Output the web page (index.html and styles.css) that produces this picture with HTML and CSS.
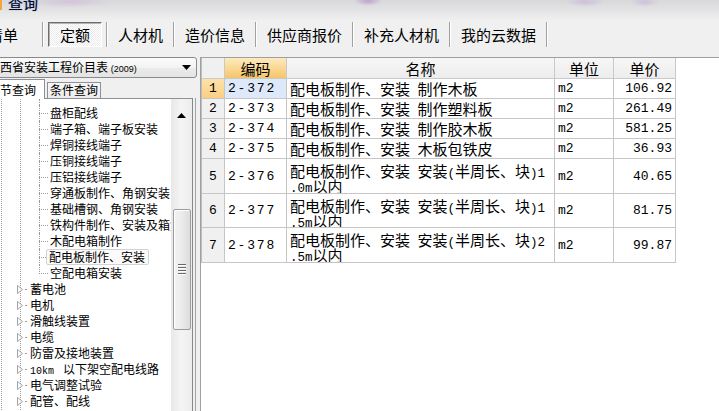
FILE: index.html
```html
<!DOCTYPE html>
<html lang="zh-CN">
<head>
<meta charset="utf-8">
<title>查询</title>
<link rel="stylesheet" href="styles.css">
</head>
<body>
<div class="app">
  <div class="titlebar">
    <span class="title-mark"></span>
    <span class="title-text">查询</span>
  </div>

  <div class="tabbar">
    <div class="tab first">清单</div>
    <div class="sep"></div>
    <div class="tab active">定额</div>
    <div class="sep"></div>
    <div class="tab">人材机</div>
    <div class="sep"></div>
    <div class="tab">造价信息</div>
    <div class="sep"></div>
    <div class="tab">供应商报价</div>
    <div class="sep"></div>
    <div class="tab">补充人材机</div>
    <div class="sep"></div>
    <div class="tab">我的云数据</div>
    <div class="sep"></div>
  </div>

  <div class="main">
    <div class="left">
      <div class="combo">
        <span class="combo-text">西省安装工程价目表 <span class="yr">(2009)</span></span>
        <svg class="combo-arrow" width="9" height="5" viewBox="0 0 9 5"><path d="M0 0 H9 L4.5 5 Z" fill="#000"/></svg>
      </div>
      <div class="qtabs">
        <div class="qtab sel">章节查询</div>
        <div class="qtab">条件查询</div>
      </div>
      <div class="treewrap">
        <div class="tree">
          <ul class="items">
            <li class="leaf stub"><span class="conn"></span></li>
            <li class="leaf"><span class="conn"></span><span class="label">盘柜配线</span></li>
            <li class="leaf"><span class="conn"></span><span class="label">端子箱、端子板安装</span></li>
            <li class="leaf"><span class="conn"></span><span class="label">焊铜接线端子</span></li>
            <li class="leaf"><span class="conn"></span><span class="label">压铜接线端子</span></li>
            <li class="leaf"><span class="conn"></span><span class="label">压铝接线端子</span></li>
            <li class="leaf"><span class="conn"></span><span class="label">穿通板制作、角钢安装</span></li>
            <li class="leaf"><span class="conn"></span><span class="label">基础槽钢、角钢安装</span></li>
            <li class="leaf"><span class="conn"></span><span class="label">铁构件制作、安装及箱盒制作</span></li>
            <li class="leaf"><span class="conn"></span><span class="label">木配电箱制作</span></li>
            <li class="leaf"><span class="conn"></span><span class="label sel">配电板制作、安装</span></li>
            <li class="leaf last"><span class="conn"></span><span class="label">空配电箱安装</span></li>
            <li class="node"><svg class="exp" width="6" height="9" viewBox="0 0 6 9"><path d="M0.5 0.5 L5.5 4.5 L0.5 8.5 Z" fill="#fff" stroke="#a3a3a3"/></svg><span class="hd"></span><span class="label">蓄电池</span></li>
            <li class="node"><svg class="exp" width="6" height="9" viewBox="0 0 6 9"><path d="M0.5 0.5 L5.5 4.5 L0.5 8.5 Z" fill="#fff" stroke="#a3a3a3"/></svg><span class="hd"></span><span class="label">电机</span></li>
            <li class="node"><svg class="exp" width="6" height="9" viewBox="0 0 6 9"><path d="M0.5 0.5 L5.5 4.5 L0.5 8.5 Z" fill="#fff" stroke="#a3a3a3"/></svg><span class="hd"></span><span class="label">滑触线装置</span></li>
            <li class="node"><svg class="exp" width="6" height="9" viewBox="0 0 6 9"><path d="M0.5 0.5 L5.5 4.5 L0.5 8.5 Z" fill="#fff" stroke="#a3a3a3"/></svg><span class="hd"></span><span class="label">电缆</span></li>
            <li class="node"><svg class="exp" width="6" height="9" viewBox="0 0 6 9"><path d="M0.5 0.5 L5.5 4.5 L0.5 8.5 Z" fill="#fff" stroke="#a3a3a3"/></svg><span class="hd"></span><span class="label">防雷及接地装置</span></li>
            <li class="node"><svg class="exp" width="6" height="9" viewBox="0 0 6 9"><path d="M0.5 0.5 L5.5 4.5 L0.5 8.5 Z" fill="#fff" stroke="#a3a3a3"/></svg><span class="hd"></span><span class="label"><span class="km">10km</span>以下架空配电线路</span></li>
            <li class="node"><svg class="exp" width="6" height="9" viewBox="0 0 6 9"><path d="M0.5 0.5 L5.5 4.5 L0.5 8.5 Z" fill="#fff" stroke="#a3a3a3"/></svg><span class="hd"></span><span class="label">电气调整试验</span></li>
            <li class="node"><svg class="exp" width="6" height="9" viewBox="0 0 6 9"><path d="M0.5 0.5 L5.5 4.5 L0.5 8.5 Z" fill="#fff" stroke="#a3a3a3"/></svg><span class="hd"></span><span class="label">配管、配线</span></li>
          </ul>
          <div class="vscroll">
            <div class="sb-btn"><svg width="9" height="5" viewBox="0 0 9 5"><path d="M0 5 L4.5 0 L9 5 Z" fill="#000"/></svg></div>
            <div class="sb-thumb"><span class="grip"></span></div>
          </div>
        </div>
      </div>
    </div>

    <div class="right">
      <div class="grid">
        <div class="c hdr rn"></div>
        <div class="c hdr hsel">编码</div>
        <div class="c hdr">名称</div>
        <div class="c hdr">单位</div>
        <div class="c hdr">单价</div>

        <div class="c rn rsel">1</div>
        <div class="c code csel">2-372</div>
        <div class="c name"><span class="txt">配电板制作、安装<span class="a"> </span>制作木板</span></div>
        <div class="c unit">m2</div>
        <div class="c price">106.92</div>

        <div class="c rn">2</div>
        <div class="c code">2-373</div>
        <div class="c name"><span class="txt">配电板制作、安装<span class="a"> </span>制作塑料板</span></div>
        <div class="c unit">m2</div>
        <div class="c price">261.49</div>

        <div class="c rn">3</div>
        <div class="c code">2-374</div>
        <div class="c name"><span class="txt">配电板制作、安装<span class="a"> </span>制作胶木板</span></div>
        <div class="c unit">m2</div>
        <div class="c price">581.25</div>

        <div class="c rn">4</div>
        <div class="c code">2-375</div>
        <div class="c name"><span class="txt">配电板制作、安装<span class="a"> </span>木板包铁皮</span></div>
        <div class="c unit">m2</div>
        <div class="c price">36.93</div>

        <div class="c rn">5</div>
        <div class="c code">2-376</div>
        <div class="c name two"><span class="txt">配电板制作、安装<span class="a"> </span>安装<span class="a">(</span>半周长、块<span class="a">)1</span><br><span class="a">.0m</span>以内</span></div>
        <div class="c unit">m2</div>
        <div class="c price">40.65</div>

        <div class="c rn">6</div>
        <div class="c code">2-377</div>
        <div class="c name two"><span class="txt">配电板制作、安装<span class="a"> </span>安装<span class="a">(</span>半周长、块<span class="a">)1</span><br><span class="a">.5m</span>以内</span></div>
        <div class="c unit">m2</div>
        <div class="c price">81.75</div>

        <div class="c rn">7</div>
        <div class="c code">2-378</div>
        <div class="c name two"><span class="txt">配电板制作、安装<span class="a"> </span>安装<span class="a">(</span>半周长、块<span class="a">)2</span><br><span class="a">.5m</span>以内</span></div>
        <div class="c unit">m2</div>
        <div class="c price">99.87</div>
      </div>
    </div>
  </div>
</div>
</body>
</html>
```

FILE: styles.css
```css
* { box-sizing: border-box; margin: 0; padding: 0; }

html, body {
  width: 719px;
  height: 411px;
  overflow: hidden;
}

body {
  background: #f0f0f0;
  color: #000;
  font-family: "Noto Sans CJK SC", "Liberation Sans", sans-serif;
}

.app {
  width: 719px;
  height: 411px;
  overflow: hidden;
}

/* ---------- title strip ---------- */
.titlebar {
  height: 20px;
  display: flex;
  align-items: flex-start;
  overflow: hidden;
  background:
    radial-gradient(ellipse 40px 6px at 70px 2px, rgba(200, 170, 215, 0.45), transparent),
    radial-gradient(ellipse 14px 5px at 368px 1px, rgba(170, 120, 200, 0.55), transparent),
    radial-gradient(ellipse 20px 5px at 585px 2px, rgba(190, 160, 215, 0.45), transparent),
    radial-gradient(ellipse 14px 5px at 645px 2px, rgba(190, 160, 215, 0.45), transparent),
    linear-gradient(180deg, #d8d8da 0%, #e2e2e4 45%, #ebebeb 80%, #efefef 100%);
}

.title-mark {
  width: 2px;
  height: 10px;
  background: #f0a83a;
}

.title-text {
  margin: -5px 0 0 6px;
  font-size: 15px;
  line-height: 15px;
  height: 15px;
  color: #0a0a14;
  text-shadow: 0 0 1px rgba(40, 90, 230, 0.8);
}

/* ---------- top tab bar ---------- */
.tabbar {
  height: 37px;
  padding-top: 2px;
  display: flex;
  align-items: flex-start;
  font-size: 15px;
}

.tab {
  height: 25px;
  line-height: 25px;
  padding: 0 10px;
  white-space: nowrap;
}

.tab.first {
  margin-left: -12px;
  padding: 0 24px 0 0;
}

.tab.active {
  margin: 0 4px;
  padding: 0 11px;
  line-height: 23px;
  border-top: 1px solid #6e6e6e;
  border-left: 1px solid #6e6e6e;
  border-right: 1px solid #ffffff;
  border-bottom: 1px solid #ffffff;
  box-shadow: inset 1px 1px 0 #b4b4b4;
  background: repeating-conic-gradient(#ffffff 0 25%, #ebebeb 0 50%) 0 0 / 2px 2px;
}

.sep {
  width: 2px;
  height: 25px;
  border-left: 1px solid #a0a0a0;
  border-right: 1px solid #ffffff;
}

/* ---------- main area ---------- */
.main {
  display: flex;
  height: 354px;
}

.left {
  width: 197px;
  flex: none;
  display: flex;
  flex-direction: column;
}

.combo {
  height: 21px;
  margin-left: -3px;
  border: 1px solid #8a8a8a;
  border-radius: 3px;
  background: linear-gradient(180deg, #fbfbfb 0%, #f3f3f3 50%, #ebebeb 51%, #e4e4e4 100%);
  display: flex;
  align-items: center;
  justify-content: space-between;
  padding: 0 5px 0 2px;
  font-size: 12px;
  white-space: nowrap;
}

.combo-text {
  line-height: 19px;
}

.yr {
  font-family: "Liberation Sans", sans-serif;
  font-size: 9px;
}

.qtabs {
  height: 20px;
  display: flex;
  align-items: flex-end;
  font-size: 12px;
}

.qtab {
  height: 16px;
  line-height: 14px;
  margin-left: 2px;
  padding: 0 2px;
  border: 1px solid #8d9099;
  border-bottom: none;
  background: linear-gradient(180deg, #f7f7f7, #ececec);
  white-space: nowrap;
}

.qtab.sel {
  position: relative;
  z-index: 1;
  height: 20px;
  line-height: 19px;
  margin: 0 0 -1px -14px;
  padding: 0 8px 0 2px;
  background: #ffffff;
  border-left: none;
}

.treewrap {
  width: 196px;
  flex: 1;
  border-right: 1px solid #a2a2a2;
  padding-right: 2px;
  overflow: hidden;
}

.tree {
  height: 100%;
  display: flex;
  border-top: 1px solid #8d9099;
  border-right: 1px solid #828790;
  background: #ffffff;
}

.items {
  list-style: none;
  width: 171px;
  flex: none;
  overflow: hidden;
  font-size: 12px;
  line-height: 16px;
  background-image:
    linear-gradient(#9a9a9a 50%, transparent 50%),
    linear-gradient(#9a9a9a 50%, transparent 50%);
  background-size: 1px 2px, 1px 2px;
  background-position: 1px 0, 20px 0;
  background-repeat: repeat-y;
}

.items li {
  display: flex;
  align-items: stretch;
  height: 16px;
  white-space: nowrap;
}

.leaf { padding-left: 39px; }

.leaf.stub { height: 6px; }

.conn {
  flex: none;
  width: 10px;
  border-left: 1px dotted #9a9a9a;
  background: linear-gradient(to right, #9a9a9a 50%, transparent 50%) 1px 8px / 2px 1px repeat-x;
}

.leaf.stub .conn { background: none; }

.leaf.last .conn {
  height: 9px;
  align-self: flex-start;
}

.label {
  margin-left: 1px;
  height: 16px;
}

.label.sel {
  margin-left: -3px;
  padding: 0 3px 0 2px;
  height: 16px;
  line-height: 14px;
  border: 1px solid #d2d2d2;
  border-radius: 2px;
  background: #fbfbfb;
}

.node { padding-left: 17px; }

.exp {
  flex: none;
  align-self: center;
  margin-top: 1px;
}

.hd {
  flex: none;
  width: 6px;
  background: linear-gradient(to right, transparent 50%, #9a9a9a 50%) 0 8px / 4px 1px repeat-x;
}

.km {
  font-family: "Liberation Mono", monospace;
  font-size: 10px;
  margin-right: 9px;
}

/* ---------- scrollbar ---------- */
.vscroll {
  width: 21px;
  flex: none;
  background: linear-gradient(to right, #e8e8e8, #f4f4f4 50%, #ececec);
  display: flex;
  flex-direction: column;
}

.sb-btn {
  height: 30px;
  display: flex;
  justify-content: center;
  padding-top: 14px;
}

.sb-thumb {
  margin: 80px 0 0 2px;
  width: 18px;
  height: 121px;
  border: 1px solid #9b9b9b;
  border-radius: 2px;
  background: linear-gradient(to right, #f3f3f3 0%, #ececec 45%, #dcdcdc 100%);
  box-shadow: inset 1px 1px 0 #ffffff;
  display: flex;
  align-items: center;
  justify-content: center;
}

.grip {
  width: 8px;
  height: 11px;
  background: repeating-linear-gradient(180deg, #6a6a6a 0 1px, #fdfdfd 1px 2px, transparent 2px 3px);
}

/* ---------- right table ---------- */
.right {
  flex: 1;
  margin-left: 3px;
  border-left: 1px solid #a0a0a0;
  border-top: 1px solid #a0a0a0;
  background: #ffffff;
}

.grid {
  display: grid;
  grid-template-columns: 23px 62px 268px 59px 62px;
  grid-template-rows: 21px 20px 20px 20px 20px 35px 34px 35px;
  width: 475px;
  border-left: 1px solid #bdbdbd;
  font-size: 15px;
}

.c {
  display: flex;
  align-items: center;
  border-right: 1px solid #c6c6c6;
  border-bottom: 1px solid #c6c6c6;
  white-space: nowrap;
  overflow: hidden;
}

.hdr {
  justify-content: center;
  background: linear-gradient(180deg, #f7f7f7, #ededed);
  border-color: #c9c9c9;
}

.hdr.hsel {
  background: linear-gradient(180deg, #fdeac0 0%, #fad894 50%, #f6c568 100%);
}

.rn {
  justify-content: center;
  background: #f0f0f0;
  font-family: "Liberation Mono", monospace;
  font-size: 13px;
}

.rn.rsel {
  background: linear-gradient(180deg, #fde2aa, #f9cf84);
}

.code {
  padding-left: 3px;
  font-family: "Liberation Mono", monospace;
  font-size: 13px;
  letter-spacing: 1.8px;
}

.code.csel { background: #dde9f8; }

.name {
  padding-left: 3px;
}

.name.two {
  align-items: flex-start;
  padding-top: 4px;
}

.txt {
  display: block;
  line-height: 15px;
  white-space: pre;
}

.a {
  font-family: "Liberation Mono", monospace;
  font-size: 12.5px;
  line-height: 0;
}

.unit {
  padding-left: 3px;
  font-family: "Liberation Mono", monospace;
  font-size: 13px;
}

.price {
  justify-content: flex-end;
  padding-right: 3px;
  font-family: "Liberation Mono", monospace;
  font-size: 13px;
}
```
